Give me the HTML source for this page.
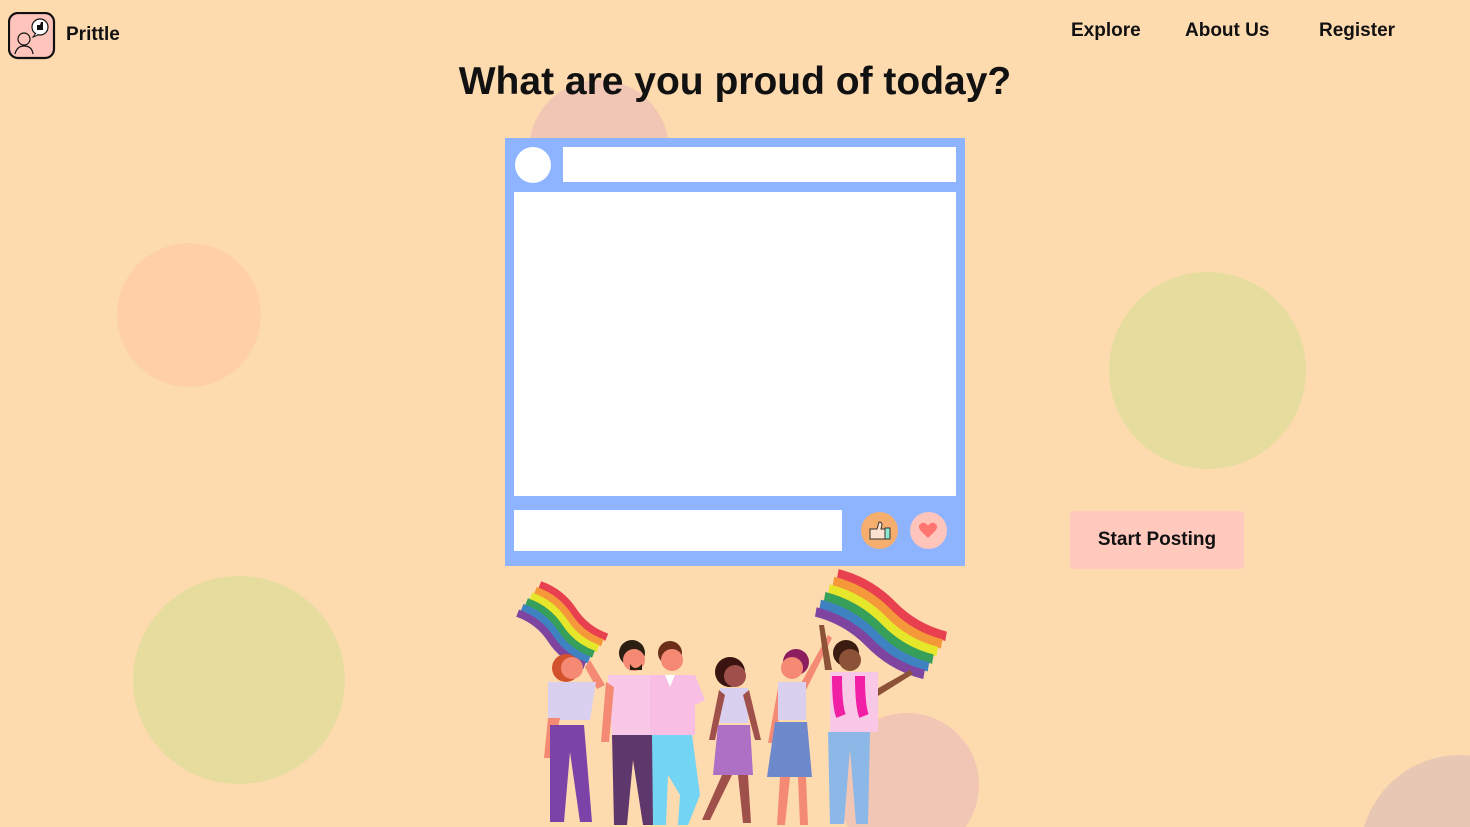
<!DOCTYPE html>
<html style="background:#FEDAAF;overflow:hidden;height:827px"><head><meta charset="utf-8"><style>
html,body{margin:0;padding:0}
body{width:1470px;height:827px;background:#FEDAAF;position:relative;overflow:hidden;font-family:"Liberation Sans",sans-serif;color:#111}
.c{position:absolute;border-radius:50%}
.nav{position:absolute;top:20px;font-size:19px;font-weight:bold}
#bg{position:absolute;left:0;top:0;width:1470px;height:827px;overflow:hidden;clip-path:inset(0)}
</style></head><body>
<div id="bg">
<div class="c" style="left:117px;top:243px;width:144px;height:144px;background:#FFD0A6"></div>
<div class="c" style="left:1109px;top:272px;width:197px;height:197px;background:#E6DC9E"></div>
<div class="c" style="left:133px;top:576px;width:212px;height:208px;background:#E6DC9E"></div>
<div class="c" style="left:529px;top:80px;width:140px;height:140px;background:#F2C6B4"></div>
<svg style="position:absolute;left:0;top:0" width="1470" height="827"><circle cx="907" cy="785" r="72" fill="#F2C6B4"/><circle cx="1460" cy="855" r="100" fill="#E8C8B4"/></svg>
</div>

<svg style="position:absolute;left:8px;top:12px" width="48" height="48" viewBox="0 0 48 48">
<rect x="1" y="1" width="45" height="45" rx="9" fill="#FFC4BC" stroke="#111" stroke-width="2.2"/>
<circle cx="16" cy="27" r="6" fill="none" stroke="#111" stroke-width="1.2"/>
<path d="M7 42 q2-8 9-8 q8 0 9 8" fill="none" stroke="#111" stroke-width="1.2"/>
<circle cx="32" cy="15" r="8" fill="#fff" stroke="#111" stroke-width="1.2"/>
<path d="M28 21 l-3 4 l5-2" fill="#fff" stroke="#111" stroke-width="1"/>
<path d="M29 13 h3 l1-3 h2 v8 h-6 z" fill="#111"/>
</svg>
<div style="position:absolute;left:66px;top:24px;font-size:19px;font-weight:bold">Prittle</div>
<div class="nav" style="left:1071px">Explore</div>
<div class="nav" style="left:1185px">About Us</div>
<div class="nav" style="left:1319px">Register</div>
<div style="position:absolute;left:0;width:1470px;top:60px;text-align:center;font-size:39px;font-weight:bold">What are you proud of today?</div>

<div style="position:absolute;left:505px;top:138px;width:460px;height:428px;background:#8FB4FF">
 <div class="c" style="left:10px;top:9px;width:36px;height:36px;background:#fff"></div>
 <div style="position:absolute;left:58px;top:9px;width:393px;height:35px;background:#fff"></div>
 <div style="position:absolute;left:9px;top:54px;width:442px;height:304px;background:#fff"></div>
 <div style="position:absolute;left:9px;top:372px;width:328px;height:41px;background:#fff"></div>
 <div class="c" style="left:356px;top:374px;width:37px;height:37px;background:#F6AE6E"></div>
 <div class="c" style="left:405px;top:374px;width:37px;height:37px;background:#FFC4BC"></div>
 <svg style="position:absolute;left:362px;top:380px" width="26" height="26" viewBox="0 0 26 26"><path d="M3 11 h7 l2-7 q3 0 3 3 l-1 4 h4 v10 h-15 z" fill="#FBE3D0" stroke="#333" stroke-width="1"/><rect x="18" y="10" width="5" height="11" fill="#8EE8D0" stroke="#333" stroke-width="1"/></svg>
 <svg style="position:absolute;left:413px;top:383px" width="20" height="18" viewBox="0 0 20 18"><path d="M10 17 L2 9 Q-1 4 4 2 Q8 1 10 5 Q12 1 16 2 Q21 4 18 9 Z" fill="#FF7570"/></svg>
</div>

<div style="position:absolute;left:1070px;top:511px;width:174px;height:58px;background:#FFC9BE;border-radius:4px;text-align:center;line-height:58px;font-size:19px;font-weight:bold">Start Posting</div>

<svg style="position:absolute;left:500px;top:560px" width="470" height="267" viewBox="0 0 470 267">
<defs>
<g id="flag" fill="none" stroke-width="8.5">
<path d="M0 4 Q25 -4 50 4 T100 4" stroke="#E8404E"/>
<path d="M0 12 Q25 4 50 12 T100 12" stroke="#F4983A"/>
<path d="M0 20 Q25 12 50 20 T100 20" stroke="#E6E62A"/>
<path d="M0 28 Q25 20 50 28 T100 28" stroke="#36A05A"/>
<path d="M0 36 Q25 28 50 36 T100 36" stroke="#3F82C2"/>
<path d="M0 44 Q25 36 50 44 T100 44" stroke="#7E44A0"/>
</g>
</defs>
<use href="#flag" transform="translate(42,22) rotate(38) scale(0.85,0.9)"/>
<use href="#flag" transform="translate(340,10) rotate(30) scale(1.25,1.1)"/>
<path d="M90 100 l15 25 l-8 4 l-12 -22z" fill="#F48A74"/>
<circle cx="66" cy="108" r="14" fill="#D2522E"/><circle cx="72" cy="108" r="11" fill="#F48A74"/>
<path d="M48 122 h48 l-6 38 h-42 z" fill="#D8D0EE"/>
<path d="M48 158 h12 l-8 40 h-8z" fill="#F48A74"/>
<path d="M50 165 h34 l8 97 h-12 l-10 -70 l-6 70 h-14 z" fill="#7B42A8"/>
<circle cx="132" cy="93" r="13" fill="#2B1E12"/><circle cx="134" cy="100" r="11" fill="#F48A74"/>
<path d="M130 104 q5 8 12 0 v6 h-12z" fill="#2B1E12"/>
<path d="M108 115 h44 v60 h-40 z" fill="#F8C8E6"/>
<path d="M106 122 l-5 60 h8 l5 -55z" fill="#F48A74"/>
<path d="M112 175 h40 l5 90 h-14 l-10 -65 l-6 65 h-13 z" fill="#5E386C"/>
<circle cx="170" cy="93" r="12" fill="#6B2E18"/><circle cx="172" cy="100" r="11" fill="#F48A74"/>
<path d="M150 115 h45 l10 25 l-10 5 v30 h-45 z" fill="#F8BEE4"/>
<path d="M165 115 l5 12 l5 -12z" fill="#fff"/>
<path d="M152 175 h40 l8 60 l-12 30 h-10 l2 -30 l-12 -20 l-2 50 h-13 z" fill="#74D4F4"/>
<circle cx="230" cy="112" r="15" fill="#3A1410"/><circle cx="235" cy="116" r="11" fill="#A0504A"/>
<path d="M220 128 h28 v35 h-28 z" fill="#D8D0EE"/>
<path d="M219 130 l-10 50 h6 l10 -45z M249 130 l12 50 h-6 l-12 -45z" fill="#A0504A"/>
<path d="M218 165 h32 l3 50 h-40 z" fill="#AE70C4"/>
<path d="M222 215 l-20 45 h8 l22 -45 z M238 215 l5 48 h8 l-3 -48 z" fill="#A0504A"/>
<circle cx="296" cy="102" r="13" fill="#8C1E60"/><circle cx="292" cy="108" r="11" fill="#F48A74"/>
<path d="M300 125 l28 -50 l4 3 l-26 52z M278 128 l-10 55 h6 l10 -50z" fill="#F48A74"/>
<path d="M278 122 h28 v38 h-28 z" fill="#D8D0EE"/>
<path d="M275 162 h32 l5 55 h-45 z" fill="#6E88CC"/>
<path d="M280 217 l-3 48 h8 l5 -48 z M298 217 l2 48 h8 l-2 -48 z" fill="#F48A74"/>
<path d="M325 110 l-6 -45 l5 0 l8 45z M375 130 l35 -20 l3 4 l-35 22z" fill="#8C5238"/>
<circle cx="346" cy="93" r="13" fill="#3A1C10"/><circle cx="350" cy="100" r="11" fill="#8C5238"/>
<path d="M330 112 h48 v60 h-48 z" fill="#F8C8E6"/>
<path d="M337 116 q0 30 4 40 M360 116 q0 30 4 40" stroke="#F01FA4" stroke-width="10" fill="none"/>
<path d="M328 172 h42 l-2 92 h-12 l-6 -75 l-6 75 h-14 z" fill="#8CB8E8"/>
</svg>
</body></html>
